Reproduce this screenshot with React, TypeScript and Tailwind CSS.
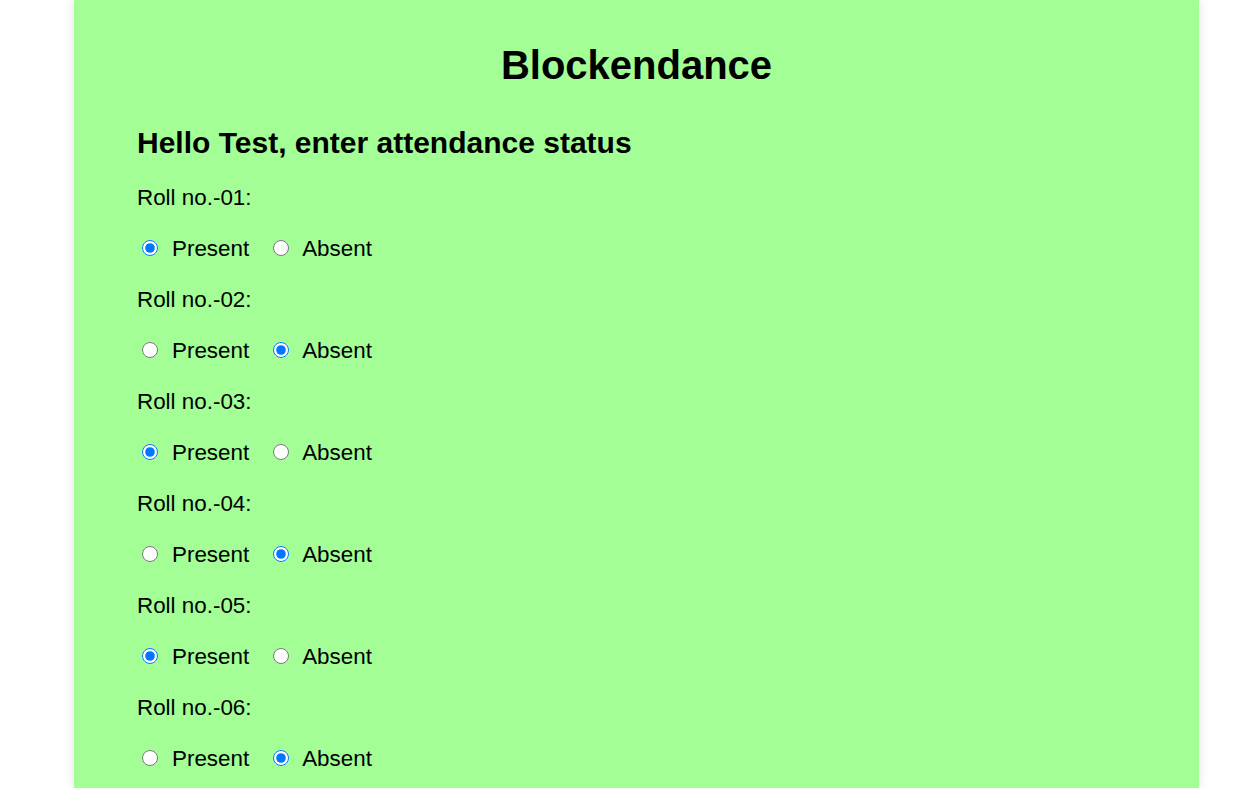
import { useState } from 'react'

const students = [
  { roll: '01', status: 'present' },
  { roll: '02', status: 'absent' },
  { roll: '03', status: 'present' },
  { roll: '04', status: 'absent' },
  { roll: '05', status: 'present' },
  { roll: '06', status: 'absent' },
]

export default function App() {
  const [marks, setMarks] = useState<Record<string, string>>(
    Object.fromEntries(students.map((s) => [s.roll, s.status])),
  )

  return (
    <div className="min-h-screen bg-white font-['Liberation_Sans',Arial,sans-serif] text-black">
      <div className="ml-[74px] min-h-screen w-[1125px] bg-[#a2fe95] pt-[42px] pl-[63px] shadow-[0_0_10px_rgba(0,0,0,0.12)]">
        {/* === Title === */}
        <h1 className="-ml-[63px] text-center text-[40px] leading-[46px] font-bold">
          Blockendance
        </h1>

        <h2 className="mt-[38px] text-[30px] leading-[34px] font-bold">
          Hello Test, enter attendance status
        </h2>

        <form className="mt-[12px] flex flex-col">
          {students.map((s) => (
            <div key={s.roll}>
              <div className="flex h-[51px] items-center text-[22.4px]">
                Roll no.-{s.roll}:
              </div>
              <div className="flex h-[51px] items-center text-[22.4px]">
                <label className="flex items-center">
                  <input
                    type="radio"
                    name={`roll-${s.roll}`}
                    checked={marks[s.roll] === 'present'}
                    onChange={() =>
                      setMarks((prev) => ({ ...prev, [s.roll]: 'present' }))
                    }
                    className="m-0 ml-[5px] h-4 w-4"
                  />
                  <span className="ml-[14px]">Present</span>
                </label>
                <label className="ml-[24px] flex items-center">
                  <input
                    type="radio"
                    name={`roll-${s.roll}`}
                    checked={marks[s.roll] === 'absent'}
                    onChange={() =>
                      setMarks((prev) => ({ ...prev, [s.roll]: 'absent' }))
                    }
                    className="m-0 h-4 w-4"
                  />
                  <span className="ml-[13px]">Absent</span>
                </label>
              </div>
            </div>
          ))}
        </form>
      </div>
    </div>
  )
}
